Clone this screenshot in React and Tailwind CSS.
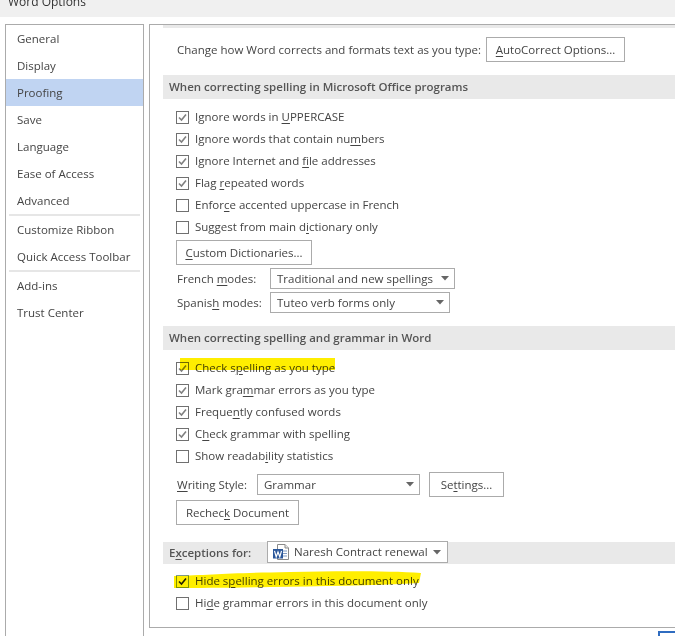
import React from "react";

const sideGroups = [
  ["General", "Display", "Proofing", "Save", "Language", "Ease of Access", "Advanced"],
  ["Customize Ribbon", "Quick Access Toolbar"],
  ["Add-ins", "Trust Center"],
];

// key letter gets underlined like a Windows access key
const Key = ({ label, k }) => {
  if (k === undefined) return <span>{label}</span>;
  return (
    <span>
      {label.slice(0, k)}
      <u className="underline-offset-2">{label[k]}</u>
      {label.slice(k + 1)}
    </span>
  );
};

const Check = ({ label, k, checked, focus }) => (
  <div className="flex items-center h-[22px] pl-[13px]">
    <span
      className={`flex items-center justify-center w-[13px] h-[13px] border bg-white shrink-0 ${
        focus ? "border-[#7f9db9]" : "border-[#707070]"
      }`}
    >
      {checked && (
        <svg width="11" height="11" viewBox="0 0 11 11" fill="none">
          <path
            d="M2 5.5 L4.5 8 L9 2.5"
            stroke={focus ? "#222222" : "#808080"}
            strokeWidth="1.6"
          />
        </svg>
      )}
    </span>
    <span className="ml-[6px]">
      <Key label={label} k={k} />
    </span>
  </div>
);

const Button = ({ label, k, className }) => (
  <div
    className={`flex items-center justify-center h-[25px] border border-[#ababab] bg-white ${className}`}
  >
    <Key label={label} k={k} />
  </div>
);

const Select = ({ label, className, icon }) => (
  <div
    className={`flex items-center justify-between h-[21px] border border-[#ababab] bg-white pl-[6px] pr-[4px] ${className}`}
  >
    <span className="flex items-center">
      {icon}
      {label}
    </span>
    <svg width="9" height="5" viewBox="0 0 9 5" className="shrink-0">
      <path d="M0 0 H8 L4 4.5 Z" fill="#666666" />
    </svg>
  </div>
);

const Header = ({ children, className = "" }) => (
  <div
    className={`flex items-center h-[24px] pl-[6px] pb-[1px] bg-[#e9e9e9] font-semibold text-[#555555] ${className}`}
  >
    {children}
  </div>
);

const WordIcon = () => (
  <svg width="17" height="16" viewBox="0 0 17 16" className="-ml-[1px] mr-[4px]">
    <path d="M4.5 0.5 H12 L15.5 4 V15.5 H4.5 Z" fill="#ffffff" stroke="#8a8a8a" />
    <path d="M12 0.5 V4 H15.5" fill="#e8e8e8" stroke="#8a8a8a" />
    <path d="M10 7 H14 M10 9.5 H14 M10 12 H14" stroke="#7f9bc4" />
    <rect x="0" y="5" width="10" height="9.5" fill="#2b579a" />
    <path d="M1.5 6.8 L3.2 12.8 L5 8 L6.8 12.8 L8.5 6.8" fill="none" stroke="#ffffff" strokeWidth="1.2" />
  </svg>
);

export default function App() {
  return (
    <div className="relative w-[675px] h-[636px] overflow-hidden bg-white text-[#444444] text-[11.5px] leading-[16px] whitespace-nowrap font-['Open_Sans',sans-serif]">
      <div className="h-[17px] bg-[#f0f0f0] pl-[8px] overflow-hidden">
        <div className="-mt-[6px] text-[12px] text-[#333333]">Word Options</div>
      </div>

      <div className="flex pt-[7px] pl-[5px]">
        <div className="w-[139px] h-[620px] border border-[#ababab] shrink-0">
          {sideGroups.map((group, i) => (
            <div key={i}>
              {i > 0 && <div className="h-[2px] mx-[3px] bg-[#e6e6e6]" />}
              {group.map((item) => (
                <div
                  key={item}
                  className={`flex items-center h-[27px] pl-[11px] ${
                    item === "Proofing" ? "bg-[#c0d4f2]" : ""
                  }`}
                >
                  {item}
                </div>
              ))}
            </div>
          ))}
        </div>

        <div className="flex-1 ml-[5px] h-[604px] border-l border-t border-b border-[#ababab] pl-[13px]">
          <div className="h-[3px] bg-[#e9e9e9]" />

          <div className="flex items-center mt-[9px] pl-[14px]">
            <span>Change how Word corrects and formats text as you type:</span>
            <Button label="AutoCorrect Options..." k={0} className="w-[139px] ml-auto mr-[50px]" />
          </div>

          <Header className="mt-[13px]">When correcting spelling in Microsoft Office programs</Header>
          <div className="mt-[7px]">
            <Check checked label="Ignore words in UPPERCASE" k={16} />
            <Check checked label="Ignore words that contain numbers" k={28} />
            <Check checked label="Ignore Internet and file addresses" k={20} />
            <Check checked label="Flag repeated words" k={5} />
            <Check label="Enforce accented uppercase in French" k={5} />
            <Check label="Suggest from main dictionary only" k={19} />
          </div>
          <Button label="Custom Dictionaries..." k={0} className="w-[136px] ml-[13px] mt-[2px]" />
          <div className="flex items-center mt-[3px] pl-[14px]">
            <span className="w-[93px]">
              <Key label="French modes:" k={7} />
            </span>
            <Select label="Traditional and new spellings" className="w-[185px]" />
          </div>
          <div className="flex items-center mt-[3px] pl-[14px]">
            <span className="w-[93px]">
              <Key label="Spanish modes:" k={6} />
            </span>
            <Select label="Tuteo verb forms only" className="w-[180px]" />
          </div>

          <Header className="mt-[13px]">When correcting spelling and grammar in Word</Header>
          <div className="mt-[7px]">
            <Check checked label="Check spelling as you type" k={7} />
            <Check checked label="Mark grammar errors as you type" k={8} />
            <Check checked label="Frequently confused words" k={6} />
            <Check checked label="Check grammar with spelling" k={1} />
            <Check label="Show readability statistics" k={11} />
          </div>
          <div className="flex items-center mt-[5px] pl-[14px]">
            <span className="w-[80px]">
              <Key label="Writing Style:" k={0} />
            </span>
            <Select label="Grammar" className="w-[163px]" />
            <Button label="Settings..." k={2} className="w-[75px] ml-[9px]" />
          </div>
          <Button label="Recheck Document" k={6} className="w-[123px] ml-[13px] mt-[3px]" />

          <div className="flex items-center h-[22px] mt-[17px] pl-[6px] bg-[#e9e9e9]">
            <span className="w-[98px] pb-[1px] font-semibold text-[#555555]">
              <Key label="Exceptions for:" k={1} />
            </span>
            <Select
              label="Naresh Contract renewal"
              icon={<WordIcon />}
              className="w-[181px] h-[22px] -mt-[2px] pr-[5px]"
            />
          </div>
          <div className="mt-[6px]">
            <Check checked focus label="Hide spelling errors in this document only" k={6} />
            <Check label="Hide grammar errors in this document only" k={2} />
          </div>
        </div>
      </div>

      {/* marker pen highlights drawn over the dialog */}
      <div className="absolute left-[180px] top-[358px] w-[155px] h-[12px] bg-[#ffee00] mix-blend-multiply" />
      <svg className="absolute left-[170px] top-[568px] mix-blend-multiply" width="256" height="24" viewBox="0 0 256 24">
        <path
          d="M4 8 C40 7 60 5 120 4 C170 3 220 3 251 5 L249 15 C200 18 150 18 100 19 C60 20 30 20 4 20 Z"
          fill="#ffee00"
        />
      </svg>

      {/* edge of the focused button cut off by the crop */}
      <div className="absolute left-[658px] top-[631px] w-[17px] h-[5px] border-l-2 border-t-2 border-[#2f6cc0]" />
    </div>
  );
}
